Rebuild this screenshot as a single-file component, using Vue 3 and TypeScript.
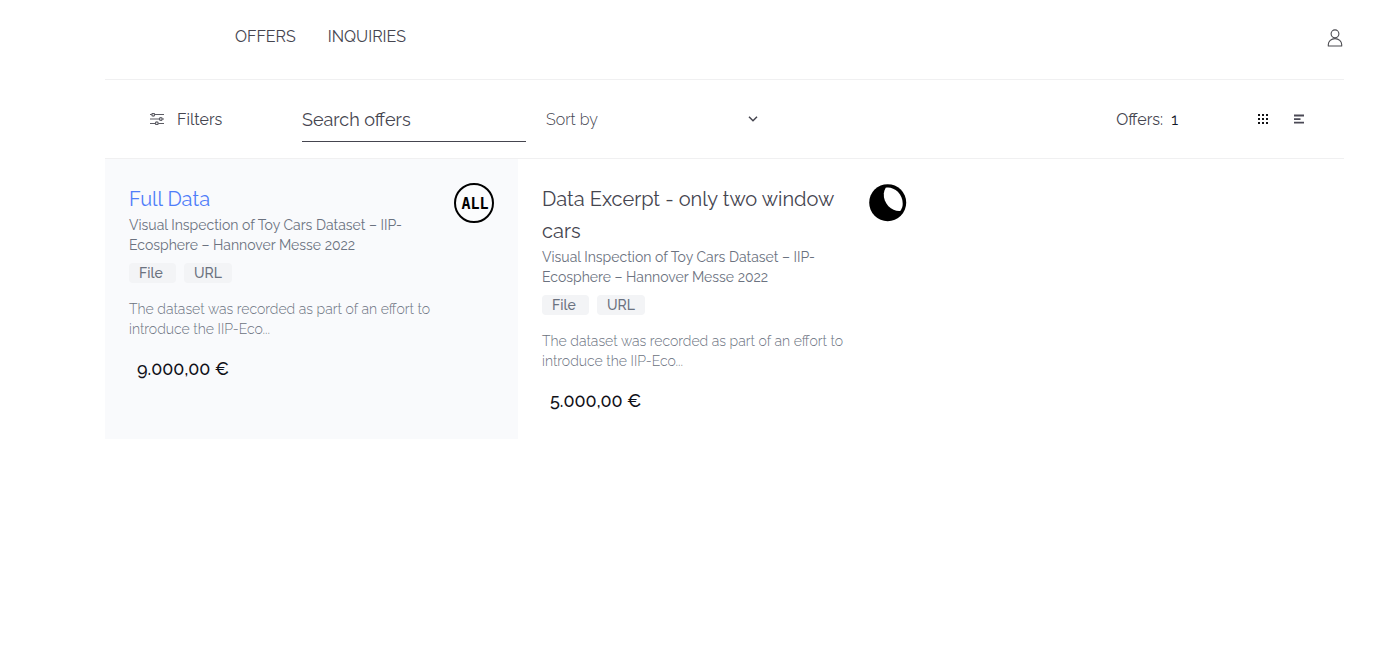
<script setup lang="ts">
import { ref } from 'vue'

interface Offer {
  id: number
  title: string
  catalog: string
  tags: string[]
  description: string
  price: string
  logo: 'all' | 'moon'
  active: boolean
}

const search = ref('')
const sort = ref('')

const offers: Offer[] = [
  {
    id: 1,
    title: 'Full Data',
    catalog: 'Visual Inspection of Toy Cars Dataset – IIP-Ecosphere – Hannover Messe 2022',
    tags: ['File', 'URL'],
    description: 'The dataset was recorded as part of an effort to introduce the IIP-Eco...',
    price: '9.000,00 €',
    logo: 'all',
    active: true,
  },
  {
    id: 2,
    title: 'Data Excerpt - only two window cars',
    catalog: 'Visual Inspection of Toy Cars Dataset – IIP-Ecosphere – Hannover Messe 2022',
    tags: ['File', 'URL'],
    description: 'The dataset was recorded as part of an effort to introduce the IIP-Eco...',
    price: '5.000,00 €',
    logo: 'moon',
    active: false,
  },
]
</script>

<template>
  <div class="page">
    <header class="header">
      <nav class="nav">
        <a href="#offers">OFFERS</a>
        <a href="#inquiries">INQUIRIES</a>
      </nav>
      <button class="icon-button" type="button" aria-label="Account">
        <svg width="16" height="18" viewBox="0 0 16 18" fill="none" stroke="#4b4b50" stroke-width="1.1">
          <circle cx="8" cy="4.8" r="3.9" />
          <path d="M1.300 17v-1.400c0-3.400 2.900-6 6.700-6s6.700 2.600 6.700 6v1.400z" stroke-linejoin="round" />
        </svg>
      </button>
    </header>

    <section class="toolbar">
      <button class="filters" type="button">
        <svg width="14" height="12" viewBox="0 0 14 12" fill="none" stroke="#5c5c64" stroke-width="1.200">
          <path d="M0 1.500h1.700M4.700 1.500H14M0 6h9.300M12.300 6H14M0 10.500h5.300M8.300 10.500H14" />
          <circle cx="3.200" cy="1.700" r="1.400" />
          <circle cx="10.800" cy="6" r="1.400" />
          <circle cx="6.800" cy="10.300" r="1.400" />
        </svg>
        <span>Filters</span>
      </button>
      <input v-model="search" class="search" type="text" placeholder="Search offers" aria-label="Search offers" />
      <div class="sort">
        <select v-model="sort" aria-label="Sort by">
          <option value="">Sort by</option>
          <option value="title">Title</option>
          <option value="price">Price</option>
        </select>
        <svg width="10" height="6" viewBox="0 0 10 6" fill="none" stroke="#45454f" stroke-width="1.500">
          <path d="M1 .8 5 4.800 9 .8" />
        </svg>
      </div>
      <p class="count">Offers: <span>1</span></p>
      <div class="views">
        <button class="icon-button" type="button" aria-label="Grid view">
          <svg width="10" height="10" viewBox="0 0 10 10" fill="#111114">
            <path d="M0 0h2v2H0zM4 0h2v2H4zM8 0h2v2H8zM0 4h2v2H0zM4 4h2v2H4zM8 4h2v2H8zM0 8h2v2H0zM4 8h2v2H4zM8 8h2v2H8z" />
          </svg>
        </button>
        <button class="icon-button" type="button" aria-label="List view">
          <svg width="10" height="10" viewBox="0 0 10 10" fill="#4a4955">
            <path d="M0 .5h10v1.900H0zM0 4.200h6.500v1.800H0zM0 7.700h10v1.900H0z" />
          </svg>
        </button>
      </div>
    </section>

    <main class="grid">
      <article v-for="offer in offers" :key="offer.id" class="card" :class="{ active: offer.active }">
        <div class="body">
          <h2>{{ offer.title }}</h2>
          <p class="catalog">{{ offer.catalog }}</p>
          <ul class="tags">
            <li v-for="tag in offer.tags" :key="tag">{{ tag }}</li>
          </ul>
          <p class="description">{{ offer.description }}</p>
          <p class="price">{{ offer.price }}</p>
        </div>
        <svg v-if="offer.logo === 'all'" class="logo" width="40" height="40" viewBox="0 0 40 40">
          <circle cx="20" cy="20" r="19" fill="#fff" fill-opacity=".4" stroke="#000" stroke-width="2" />
          <text class="logo-text" x="21" y="26" text-anchor="middle">ALL</text>
        </svg>
        <svg v-else class="logo" width="40" height="40" viewBox="0 0 40 40">
          <circle cx="20.700" cy="19.700" r="18.500" fill="#000" />
          <path d="M18.700 4.700C25.700 3 35.700 9.500 35.700 20.500C35.700 23.500 34.900 26 33.300 27.900C26 28.800 16 21.500 16.800 10.500C17 8.500 17.700 6.500 18.700 4.700Z" fill="#fff" />
        </svg>
      </article>
    </main>
  </div>
</template>

<style>
body {
  margin: 0;
  background: #fff;
}
</style>

<style scoped>
.page {
  margin: 0 55px 0 105px;
  font-family: Raleway, Lato, "Open Sans", sans-serif;
  font-variant-numeric: oldstyle-nums;
  font-weight: 400;
  font-size: 16px;
  line-height: 24px;
  color: #45454f;
}

h2,
p,
ul {
  margin: 0;
  padding: 0;
}

button,
input,
select {
  margin: 0;
  padding: 0;
  border: 0;
  background: none;
  font: inherit;
  color: inherit;
}

svg {
  display: block;
  flex: none;
}

.header {
  display: flex;
  justify-content: space-between;
  align-items: center;
  height: 79px;
  border-bottom: 1px solid #f0f0f1;
}

.nav {
  display: flex;
  gap: 32px;
  padding: 0 0 6px 130px;
}

.nav a {
  color: inherit;
  text-decoration: none;
}

.header .icon-button {
  padding: 0 1px 4px;
}

.toolbar {
  display: flex;
  align-items: center;
  height: 78px;
  padding: 0 40px 0 45px;
  border-bottom: 1px solid #f0f0f1;
}

.filters {
  display: flex;
  align-items: center;
  gap: 13px;
  width: 152px;
}

.filters span,
.count {
  padding-top: 2px;
}

.search {
  box-sizing: border-box;
  width: 224px;
  height: 46px;
  padding-top: 2px;
  border-bottom: 1px solid #45454f;
  border-radius: 0;
  outline: none;
  font-size: 18px;
}

.search::placeholder {
  color: #45454f;
  opacity: 1;
}

.sort {
  display: flex;
  align-items: center;
  width: 212px;
  margin-left: 20px;
}

.sort select {
  flex: 1;
  appearance: none;
  padding-top: 2px;
  font-weight: 300;
  line-height: 24px;
}

.count {
  margin-left: auto;
}

.count span {
  margin-left: 4px;
  color: #111827;
}

.views {
  display: flex;
  gap: 26px;
  margin-left: 80px;
}

.grid {
  display: grid;
  grid-template-columns: repeat(3, 1fr);
}

.card {
  display: flex;
  justify-content: space-between;
  gap: 16px;
  padding: 24px;
}

.card.active {
  background: #f9fafc;
}

h2 {
  font-size: 20px;
  font-weight: 400;
  line-height: 32px;
}

.active h2 {
  color: #4f7df9;
}

.catalog,
.description {
  font-size: 14px;
  line-height: 20px;
  color: #6b7280;
}

.description {
  font-weight: 300;
}

.tags {
  display: flex;
  gap: 8px;
  margin: 8px 0 16px;
  list-style: none;
}

.tags li {
  box-sizing: border-box;
  min-width: 47px;
  padding: 0 10px;
  border-radius: 4px;
  background: #f3f4f6;
  font-size: 14px;
  font-weight: 500;
  line-height: 20px;
  color: #6b7280;
}

.price {
  margin: 16px 0 0 8px;
  font-size: 18px;
  font-weight: 500;
  line-height: 28px;
  color: #111118;
}

.logo-text {
  font-family: "Liberation Sans Narrow", "DejaVu Sans Mono", monospace;
  font-size: 15px;
  font-weight: 700;
}
</style>
